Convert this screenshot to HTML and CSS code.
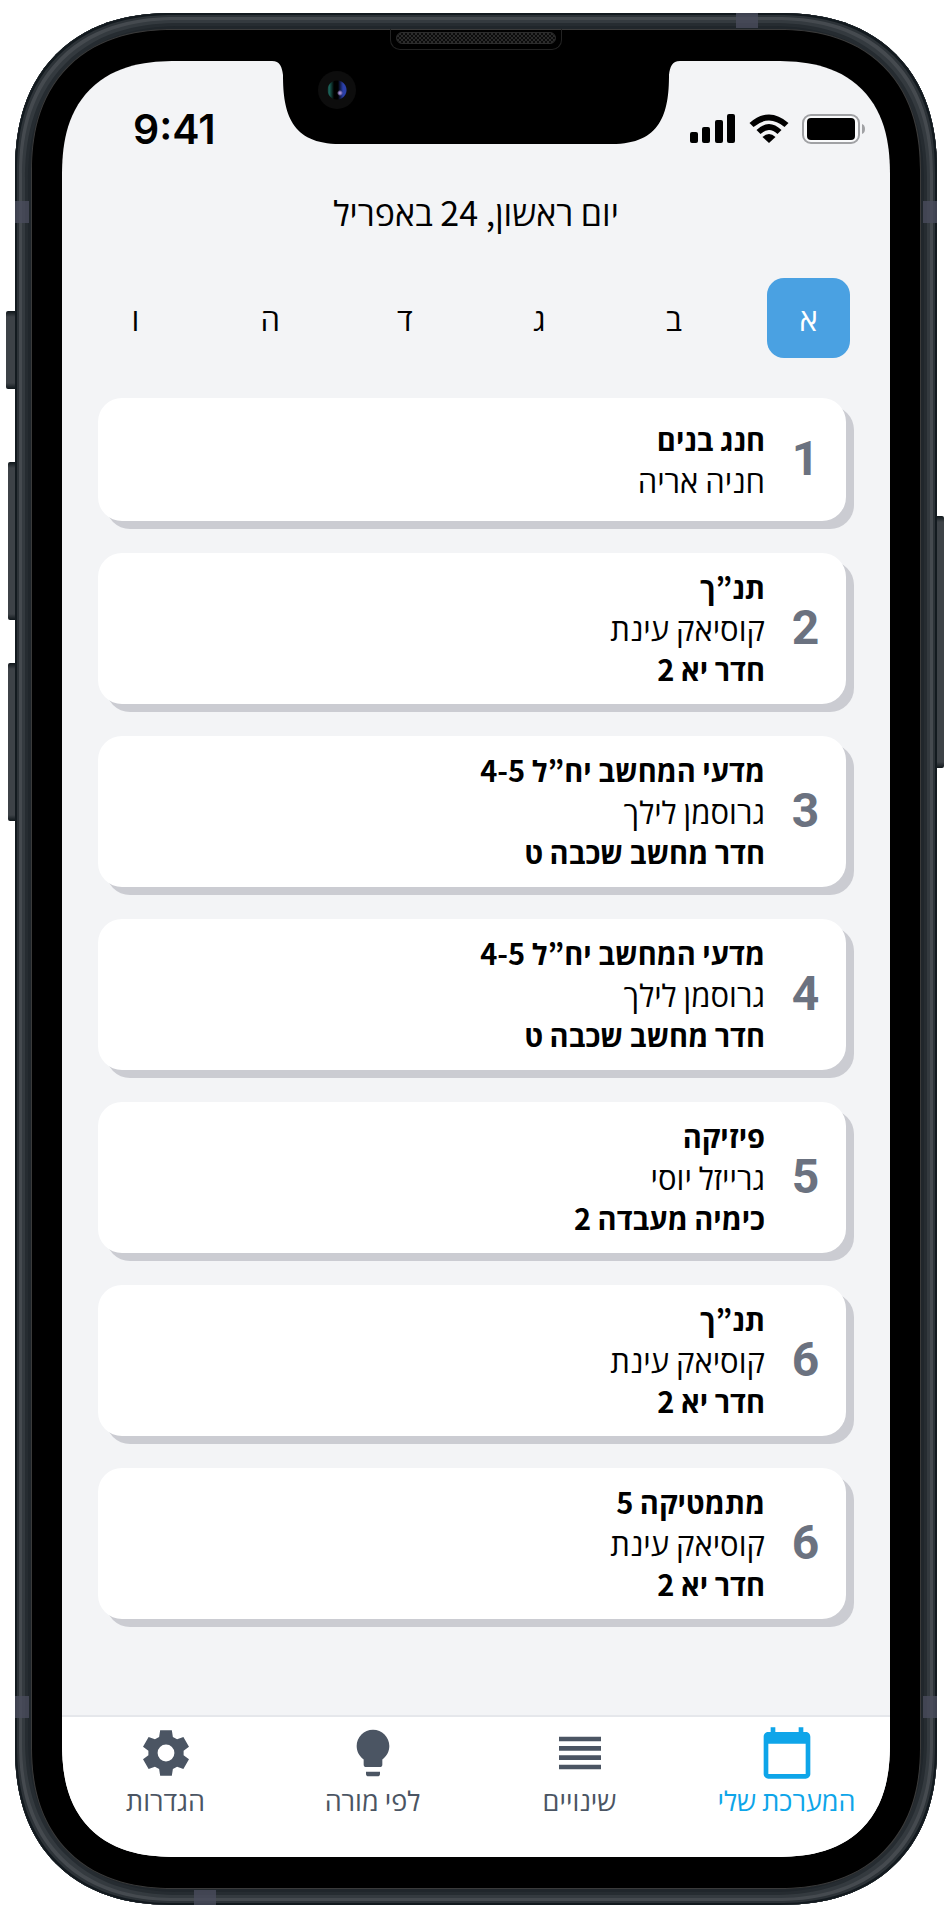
FILE: index.html
```html
<!DOCTYPE html>
<html lang="he" dir="rtl">
<head>
<meta charset="utf-8">
<meta name="viewport" content="width=device-width, initial-scale=1">
<title>המערכת שלי</title>
<link rel="stylesheet" href="styles.css">
</head>
<body>
<div class="device">
  <span class="key key-mute"></span>
  <span class="key key-up"></span>
  <span class="key key-down"></span>
  <span class="key key-power"></span>
  <div class="frame">
    <span class="band band-top"></span>
    <span class="band band-bottom"></span>
    <span class="band band-left-high"></span>
    <span class="band band-left-low"></span>
    <span class="band band-right-high"></span>
    <span class="band band-right-low"></span>
    <div class="bezel">
      <div class="speaker"><span class="grille"></span></div>
      <div class="screen">
        <svg class="notch" viewBox="0 0 408 84" aria-hidden="true">
          <path d="M0 0H408C400 0 398 6 397 14C397 52 389 83 340 83H68C19 83 11 52 11 14C10 6 8 0 0 0Z"/>
        </svg>
        <span class="camera"></span>
        <header class="status" dir="ltr">
          <time class="clock">9:41</time>
          <div class="indicators">
            <svg width="46" height="30" viewBox="0 0 46 30" aria-hidden="true">
              <rect x="0" y="18" width="8" height="11" rx="2"/><rect x="12" y="13" width="8" height="16" rx="2"/><rect x="25" y="6" width="8" height="23" rx="2"/><rect x="37" y="0" width="8" height="29" rx="2"/>
            </svg>
            <svg width="40" height="30" viewBox="0 0 40 30" aria-hidden="true">
              <path d="M0.500 9Q20-8 39.500 9L35.500 13Q20 0 4.500 13Z"/><path d="M7.500 16Q20 4 32.500 16L28.500 20Q20 12 11.500 20Z"/><path d="M13.500 23Q20 17 26.500 23L20 29Z"/>
            </svg>
            <svg width="64" height="30" viewBox="0 0 64 30" aria-hidden="true">
              <rect x="1" y="1" width="56" height="28" rx="8" fill="#fff" fill-opacity=".5" stroke="#a0a1a4" stroke-width="2"/><rect x="5" y="4" width="48" height="22" rx="4"/><path d="M60 10Q63 11 63 15T60 20Z" fill="#a0a1a4"/>
            </svg>
          </div>
        </header>
        <main class="content">
          <h1 class="date">יום ראשון, 24 באפריל</h1>
          <div class="days">
            <button class="day day-active" type="button" aria-pressed="true">א</button>
            <button class="day" type="button">ב</button>
            <button class="day" type="button">ג</button>
            <button class="day" type="button">ד</button>
            <button class="day" type="button">ה</button>
            <button class="day" type="button">ו</button>
          </div>
          <ul class="lessons">
            <li class="lesson"><span class="hour">1</span><div class="info"><strong>חנג בנים</strong><span>חניה אריה</span></div></li>
            <li class="lesson"><span class="hour">2</span><div class="info"><strong>תנ”ך</strong><span>קוסיאק עינת</span><strong>חדר יא 2</strong></div></li>
            <li class="lesson"><span class="hour">3</span><div class="info"><strong>מדעי המחשב יח”ל <bdi dir="ltr">4-5</bdi></strong><span>גרוסמן לילך</span><strong>חדר מחשב שכבה ט</strong></div></li>
            <li class="lesson"><span class="hour">4</span><div class="info"><strong>מדעי המחשב יח”ל <bdi dir="ltr">4-5</bdi></strong><span>גרוסמן לילך</span><strong>חדר מחשב שכבה ט</strong></div></li>
            <li class="lesson"><span class="hour">5</span><div class="info"><strong>פיזיקה</strong><span>גרייזל יוסי</span><strong>כימיה מעבדה 2</strong></div></li>
            <li class="lesson"><span class="hour">6</span><div class="info"><strong>תנ”ך</strong><span>קוסיאק עינת</span><strong>חדר יא 2</strong></div></li>
            <li class="lesson"><span class="hour">6</span><div class="info"><strong>מתמטיקה 5</strong><span>קוסיאק עינת</span><strong>חדר יא 2</strong></div></li>
          </ul>
        </main>
        <nav class="tabs">
          <a class="tab tab-active" href="#" aria-current="page">
            <svg class="icon" viewBox="0 0 24 24" aria-hidden="true"><path d="M20 3h-1V1h-2v2H7V1H5v2H4c-1.100 0-2 .9-2 2v16c0 1.100.9 2 2 2h16c1.100 0 2-.9 2-2V5c0-1.100-.9-2-2-2zm0 18H4V8h16v13z"/></svg>
            <span>המערכת שלי</span>
          </a>
          <a class="tab" href="#">
            <svg class="icon" viewBox="0 0 24 24" aria-hidden="true"><path d="M3 15h18v-2H3v2zm0 4h18v-2H3v2zm0-8h18V9H3v2zm0-6v2h18V5H3z"/></svg>
            <span>שינויים</span>
          </a>
          <a class="tab" href="#">
            <svg class="icon" viewBox="0 0 24 24" aria-hidden="true"><path d="M9 21c0 .55.45 1 1 1h4c.55 0 1-.45 1-1v-1H9v1zm3-19C8.140 2 5 5.140 5 9c0 2.380 1.190 4.470 3 5.740V17c0 .55.45 1 1 1h6c.55 0 1-.45 1-1v-2.260c1.810-1.270 3-3.360 3-5.740 0-3.860-3.140-7-7-7z"/></svg>
            <span>לפי מורה</span>
          </a>
          <a class="tab" href="#">
            <svg class="icon" viewBox="0 0 24 24" aria-hidden="true"><path fill-rule="evenodd" d="M9.500 2.200h5l.45 2.900 1.800 1.050 2.700-1.050 2.400 4.200-2.300 1.750v1.900l2.300 1.750-2.400 4.200-2.700-1.050-1.800 1.050-.45 2.900h-5l-.45-2.900-1.800-1.050-2.700 1.050-2.400-4.200 2.300-1.750v-1.900L2.150 9.300l2.400-4.200 2.700 1.050 1.800-1.050zM12 8.400a3.600 3.600 0 1 0 0 7.200 3.600 3.600 0 0 0 0-7.200z"/></svg>
            <span>הגדרות</span>
          </a>
        </nav>
      </div>
    </div>
  </div>
</div>
</body>
</html>
```
FILE: styles.css
```css
* { box-sizing: border-box; }
body {
  margin: 0;
  background: #fff;
  color: #000;
  font-family: "Noto Sans CJK KR", "Open Sans", "Noto Sans", sans-serif;
}
.device { position: relative; padding: 13px 15px 14px; }

/* Phone shell */
.frame {
  position: relative;
  padding: 16px;
  border-radius: 158px;
  corner-shape: superellipse(1.2);
  background: #20262b;
  overflow: hidden;
  box-shadow: inset 0 0 0 2px #131a1f, inset 0 0 0 4px #2c3237, inset 0 0 0 7px #454a4f, inset 0 0 0 10px #343a3f, inset 0 0 0 13px #262c31;
}
.bezel {
  position: relative;
  padding: 31px 30px;
  border-radius: 142px;
  corner-shape: superellipse(1.2);
  background: #000;
  border: 1px solid #3a3a3a;
}
.band { position: absolute; background: #4a4c5c; opacity: .8; }
.band-top { top: 0; right: 179px; width: 22px; height: 15px; }
.band-bottom { bottom: 0; left: 179px; width: 22px; height: 15px; }
.band-left-high, .band-right-high { top: 188px; width: 14px; height: 22px; }
.band-left-low, .band-right-low { bottom: 187px; width: 14px; height: 22px; }
.band-left-high, .band-left-low { left: 0; }
.band-right-high, .band-right-low { right: 0; }
.key { position: absolute; width: 9px; background: linear-gradient(#10171b, #3d4247 6px, #3d4247 calc(100% - 6px), #10171b); }
.key-mute { left: 6px; top: 311px; height: 78px; border-radius: 2px 0 0 2px; }
.key-up { left: 8px; top: 462px; height: 158px; border-radius: 2px 0 0 2px; }
.key-down { left: 8px; top: 663px; height: 158px; border-radius: 2px 0 0 2px; }
.key-power { right: 8px; top: 516px; height: 252px; border-radius: 0 2px 2px 0; }
.speaker {
  position: absolute;
  top: -1px;
  left: 50%;
  width: 172px;
  height: 21px;
  padding: 3px 5px 5px;
  transform: translateX(-50%);
  border: 1px solid #222;
  border-top: 0;
  border-radius: 0 0 10px 10px;
}
.grille {
  display: block;
  height: 12px;
  border-radius: 6px;
  border: 1px solid #2c2c2c;
  background: repeating-conic-gradient(#2b2b2b 0 25%, #0c0c0c 0 50%) 0 0 / 4px 4px;
}

/* Screen */
.screen {
  position: relative;
  display: flex;
  flex-direction: column;
  border-radius: 115px;
  corner-shape: superellipse(1.3);
  overflow: hidden;
  background: #f3f4f6;
}
.notch { position: absolute; top: 0; left: 50%; width: 408px; height: 84px; transform: translateX(-50%); }
.camera {
  position: absolute;
  top: 10px;
  left: 256px;
  width: 38px;
  height: 38px;
  border-radius: 50%;
  background: radial-gradient(circle at 22px 22px, #a38ad0 0 1px, transparent 3px), radial-gradient(circle, transparent 0 9px, #0d0d0d 10px), linear-gradient(90deg, #0d0d0d 9px, #1d6a60 11px, #000 16px, #000 20px, #2a3fa8 25px, #2a3fa8 28px);
}
.status {
  display: flex;
  justify-content: space-between;
  align-items: center;
  padding: 43px 24px 0 71px;
  height: 93px;
}
.clock { font: 600 41px/48px Inter, sans-serif; }
.indicators { display: flex; gap: 13px; }
.content { padding: 30px 44px 96px 36px; }
.date { margin: 0 -8px 38px 0; font-size: 34px; line-height: 56px; font-weight: 400; text-align: center; }
.days { display: flex; justify-content: space-between; margin: 0 -4px 40px; }
.day {
  width: 83px;
  height: 80px;
  padding: 0;
  border: 0;
  border-radius: 17px;
  background: none;
  color: inherit;
  font: 500 31px/48px "Noto Sans CJK KR", "Open Sans", "Noto Sans", sans-serif;
}
.day-active { background: #4aa1e2; color: #fff; }
.lessons { display: grid; gap: 32px; margin: 0; padding: 0; list-style: none; }
.lesson {
  display: flex;
  align-items: center;
  min-height: 123px;
  padding: 13px 0 15px;
  border-radius: 24px;
  background: #fff;
  box-shadow: 8px 8px 0 #cbccd2;
}
.hour { width: 81px; text-align: center; font: 700 48px/56px Roboto, sans-serif; color: #6b7280; }
.info { flex: 1; font-size: 31px; font-weight: 400; line-height: 41px; }
.info > * { display: block; }
.info strong { font-size: 29px; font-weight: 700; }
.tabs { display: flex; min-height: 142px; padding-top: 8px; border-top: 2px solid #e5e7eb; background: #fff; }
.tab {
  flex: 1 1 0;
  display: flex;
  flex-direction: column;
  align-items: center;
  color: #4b5563;
  font-size: 27px;
  font-weight: 500;
  line-height: 37px;
  text-decoration: none;
  white-space: nowrap;
}
.tab-active { color: #0ea5e9; }
.icon { width: 56px; height: 56px; fill: currentColor; }
```
